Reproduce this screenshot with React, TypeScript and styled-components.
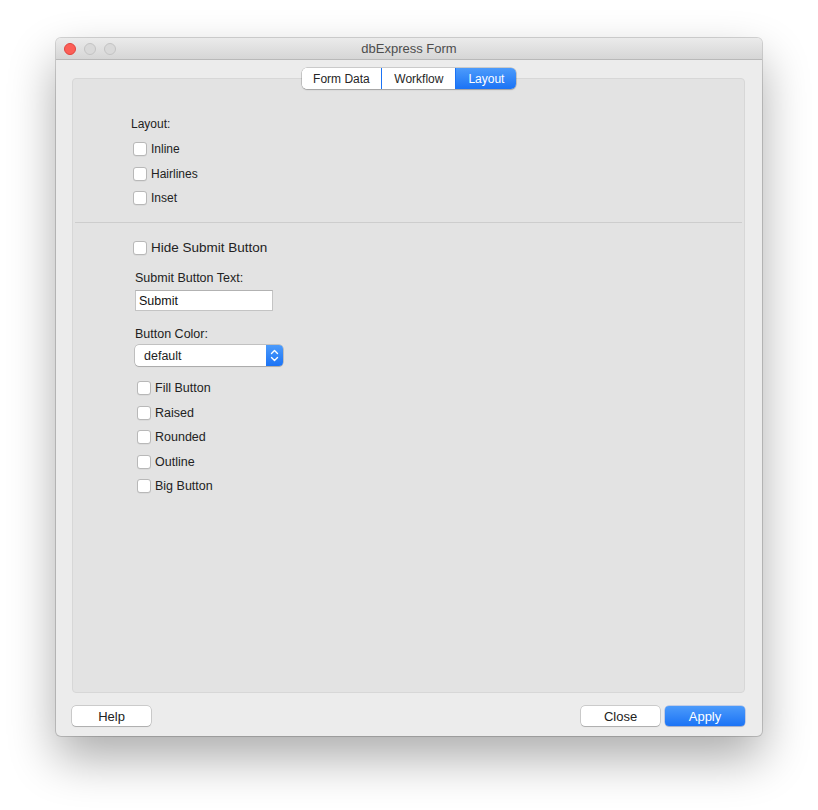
import React from 'react';
import styled, { createGlobalStyle } from 'styled-components';

const Global = createGlobalStyle`
  html, body { margin: 0; padding: 0; background: #ffffff; }
  body { font-family: "Liberation Sans", Arial, sans-serif; color: #222; }
  * { box-sizing: border-box; }
`;

const Page = styled.div`
  width: 818px;
  height: 810px;
  padding: 38px 0 0 56px;
`;

const Window = styled.div`
  width: 706px;
  height: 698px;
  border-radius: 5px;
  background: #ececec;
  overflow: hidden;
  display: flex;
  flex-direction: column;
  box-shadow: 0 0 0 1px rgba(0, 0, 0, 0.16), 0 22px 48px rgba(0, 0, 0, 0.33);
`;

const TitleBar = styled.div`
  height: 22px;
  flex: none;
  display: grid;
  grid-template-columns: 1fr auto 1fr;
  align-items: center;
  background: linear-gradient(#ebebeb, #d6d6d6);
  border-bottom: 1px solid #b9b9b9;
`;

const Lights = styled.div`
  display: flex;
  gap: 8px;
  padding-left: 8px;
`;

const Light = styled.span<{ $red?: boolean }>`
  width: 12px;
  height: 12px;
  border-radius: 50%;
  background: ${(p) => (p.$red ? '#fc5f57' : '#d9d9d9')};
  border: 1px solid ${(p) => (p.$red ? '#e0443e' : '#c3c3c3')};
`;

const Title = styled.div`
  font-size: 13px;
  color: #4d4d4d;
  line-height: 21px;
`;

const Body = styled.div`
  flex: 1;
  display: flex;
  flex-direction: column;
  padding: 8px 17px 10px 16px;
`;

const Tabs = styled.div`
  align-self: center;
  display: flex;
  height: 21px;
  border-radius: 5px;
  overflow: hidden;
  position: relative;
  z-index: 1;
  background: #fff;
  margin-left: 1px;
  box-shadow: 0 0 0 0.5px rgba(0, 0, 0, 0.28), 0 1px 1.5px rgba(0, 0, 0, 0.18);
`;

const Tab = styled.div<{ $active?: boolean; $px?: number }>`
  display: flex;
  align-items: center;
  padding: 0 ${(p) => p.$px ?? 12}px;
  font-size: 12px;
  color: ${(p) => (p.$active ? '#fff' : '#262626')};
  background: ${(p) => (p.$active ? 'linear-gradient(#4c9bfb, #1b73f5)' : '#fff')};
  & + & {
    border-left: 1px solid ${(p) => (p.$active ? '#1b73f5' : '#d8d8d8')};
  }
`;

const Panel = styled.div`
  flex: 1;
  margin-top: -11px;
  background: #e3e3e3;
  border: 1px solid #d7d7d7;
  border-radius: 4px;
  display: flex;
  flex-direction: column;
`;

const TopSection = styled.div`
  padding: 37px 0 0 58px;
  display: flex;
  flex-direction: column;
`;

const Label = styled.div<{ $size?: number; $mt?: number; $ml?: number; $mb?: number }>`
  font-size: ${(p) => p.$size ?? 12}px;
  line-height: 16px;
  margin-top: ${(p) => p.$mt ?? 0}px;
  margin-left: ${(p) => p.$ml ?? 0}px;
  margin-bottom: ${(p) => p.$mb ?? 0}px;
  color: #222;
`;

const CheckRow = styled.label<{ $size?: number; $ml?: number; $gap?: number }>`
  display: flex;
  align-items: center;
  height: 24.5px;
  gap: ${(p) => p.$gap ?? 4}px;
  margin-left: ${(p) => p.$ml ?? 0}px;
  font-size: ${(p) => p.$size ?? 12}px;
  color: #222;
`;

const Check = styled.input.attrs({ type: 'checkbox' })`
  appearance: none;
  -webkit-appearance: none;
  margin: 0;
  width: 14px;
  height: 14px;
  flex: none;
  background: #fff;
  border: 1px solid #b8b8b8;
  border-radius: 3px;
  box-shadow: 0 0.5px 0.5px rgba(0, 0, 0, 0.08);
`;

const Separator = styled.div`
  height: 1px;
  background: #cdcdcd;
  margin: 11px 2px 0 2px;
`;

const LowerSection = styled.div`
  padding: 13px 0 0 60px;
  display: flex;
  flex-direction: column;
  align-items: flex-start;
`;

const TextInput = styled.input`
  margin: 4px 0 0 2px;
  width: 138px;
  height: 21px;
  padding: 0 0 0 3px;
  border: 1px solid #c4c4c4;
  border-top-color: #b2b2b2;
  background: #fff;
  font-family: "Liberation Sans", Arial, sans-serif;
  font-size: 12.5px;
  color: #111;
  outline: none;
`;

const Select = styled.div`
  margin: 3px 0 10px 2px;
  width: 148px;
  height: 21px;
  display: flex;
  align-items: center;
  justify-content: space-between;
  background: #fff;
  border-radius: 4px;
  box-shadow: 0 0 0 0.5px rgba(0, 0, 0, 0.3), 0 1px 1px rgba(0, 0, 0, 0.12);
  font-size: 12.5px;
  color: #222;
  padding-left: 9px;
  overflow: hidden;
`;

const Stepper = styled.div`
  width: 17px;
  height: 100%;
  display: flex;
  align-items: center;
  justify-content: center;
  background: linear-gradient(#4c9bfb, #1b73f5);
`;

const Footer = styled.div`
  margin-top: 13px;
  display: flex;
  justify-content: space-between;
  align-items: center;
`;

const ButtonGroup = styled.div`
  display: flex;
  gap: 5px;
`;

const Button = styled.button<{ $primary?: boolean; $w?: number }>`
  width: ${(p) => p.$w ?? 79}px;
  height: 20px;
  border: none;
  border-radius: 4px;
  padding: 0;
  font-family: "Liberation Sans", Arial, sans-serif;
  font-size: 13px;
  color: ${(p) => (p.$primary ? '#fff' : '#222')};
  background: ${(p) => (p.$primary ? 'linear-gradient(#4c9bfb, #1b73f5)' : '#fff')};
  box-shadow: ${(p) =>
    p.$primary
      ? '0 0 0 0.5px rgba(0, 60, 200, 0.35), 0 1px 1px rgba(0, 0, 0, 0.15)'
      : '0 0 0 0.5px rgba(0, 0, 0, 0.28), 0 1px 1px rgba(0, 0, 0, 0.15)'};
`;

const StepperIcon = () => (
  <svg width="9" height="13" viewBox="0 0 9 13" fill="none" stroke="#fff" strokeWidth="1.4" strokeLinecap="round" strokeLinejoin="round">
    <path d="M1.5 4.5 L4.5 1.5 L7.5 4.5" />
    <path d="M1.5 8.5 L4.5 11.5 L7.5 8.5" />
  </svg>
);

const layoutOptions = ['Inline', 'Hairlines', 'Inset'];
const buttonOptions = ['Fill Button', 'Raised', 'Rounded', 'Outline', 'Big Button'];

export default function App() {
  return (
    <>
      <Global />
      <Page>
        <Window>
          <TitleBar>
            <Lights>
              <Light $red />
              <Light />
              <Light />
            </Lights>
            <Title>dbExpress Form</Title>
            <div />
          </TitleBar>
          <Body>
            <Tabs>
              <Tab $px={11.5}>Form Data</Tab>
              <Tab>Workflow</Tab>
              <Tab $active>Layout</Tab>
            </Tabs>
            <Panel>
              <TopSection>
                <Label $mb={5}>Layout:</Label>
                {layoutOptions.map((o) => (
                  <CheckRow key={o} $ml={2}>
                    <Check />
                    {o}
                  </CheckRow>
                ))}
              </TopSection>
              <Separator />
              <LowerSection>
                <CheckRow $size={13.5}>
                  <Check />
                  Hide Submit Button
                </CheckRow>
                <Label $size={12.5} $mt={10} $ml={2}>Submit Button Text:</Label>
                <TextInput defaultValue="Submit" />
                <Label $size={12.5} $mt={15} $ml={2}>Button Color:</Label>
                <Select>
                  default
                  <Stepper>
                    <StepperIcon />
                  </Stepper>
                </Select>
                {buttonOptions.map((o) => (
                  <CheckRow key={o} $ml={4} $size={12.5}>
                    <Check />
                    {o}
                  </CheckRow>
                ))}
              </LowerSection>
            </Panel>
            <Footer>
              <Button>Help</Button>
              <ButtonGroup>
                <Button>Close</Button>
                <Button $primary $w={80}>Apply</Button>
              </ButtonGroup>
            </Footer>
          </Body>
        </Window>
      </Page>
    </>
  );
}
